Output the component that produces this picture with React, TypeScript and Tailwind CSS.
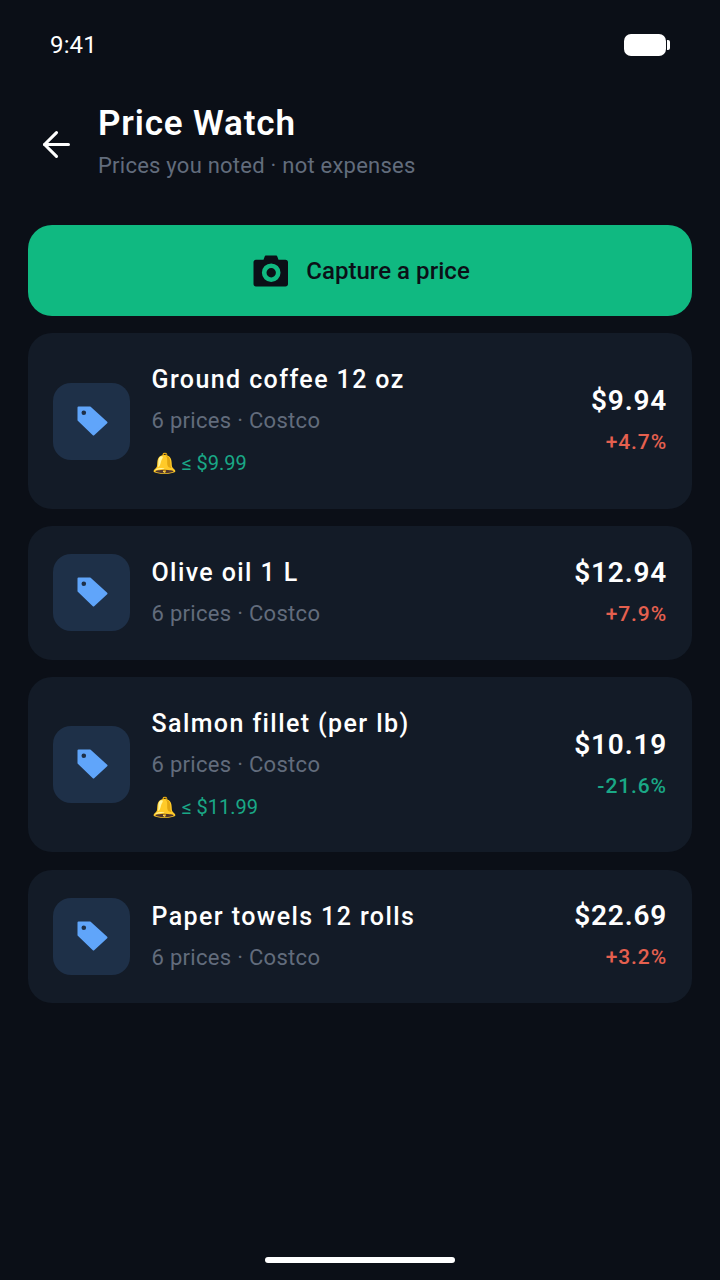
import { ArrowLeft } from "lucide-react";

interface Item {
  name: string;
  price: string;
  change: string;
  up: boolean;
  alert?: string;
}

const items: Item[] = [
  { name: "Ground coffee 12 oz", price: "$9.94", change: "+4.7%", up: true, alert: "≤ $9.99" },
  { name: "Olive oil 1 L", price: "$12.94", change: "+7.9%", up: true },
  { name: "Salmon fillet (per lb)", price: "$10.19", change: "-21.6%", up: false, alert: "≤ $11.99" },
  { name: "Paper towels 12 rolls", price: "$22.69", change: "+3.2%", up: true },
];

function TagIcon() {
  return (
    <svg width="33" height="33" viewBox="0 0 33 33" className="ml-[1.5px]">
      <path
        d="M2.5 2.5H14L30.5 17.5L17.5 29.5L2.5 15ZM7.8 4.5a3.3 3.3 0 1 0 0 6.6a3.3 3.3 0 1 0 0-6.6Z"
        fill="#60a5fa"
        stroke="#60a5fa"
        strokeWidth="2"
        strokeLinejoin="round"
        fillRule="evenodd"
      />
    </svg>
  );
}

function CameraIcon() {
  return (
    <svg width="36" height="32" viewBox="0 0 36 32" fill="#0b0f17">
      <path
        d="M10.5 4.7 11.6 1.8C11.8 1.1 12.4.6 13.2.6H22.8C23.6.6 24.2 1.1 24.4 1.8L25.5 4.7H32.5C34 4.7 35 5.7 35 7.2V29C35 30.5 34 31.5 32.5 31.5H3C1.5 31.5.5 30.5.5 29V7.2C.5 5.7 1.5 4.7 3 4.7ZM18.2 8.4a9.3 9.3 0 1 0 0 18.6a9.3 9.3 0 1 0 0-18.6ZM18.2 13a4.7 4.7 0 1 1 0 9.4a4.7 4.7 0 1 1 0-9.4Z"
        fillRule="evenodd"
      />
    </svg>
  );
}

function PriceCard({ item }: { item: Item }) {
  return (
    <div className="flex items-center rounded-[24px] bg-[#131b27] px-[25px]">
      <div className="flex h-[77px] w-[77px] shrink-0 items-center justify-center rounded-[18px] bg-[#1e3048]">
        <TagIcon />
      </div>
      <div className="ml-[21.5px] flex min-w-0 flex-1 flex-col gap-[12px] pt-[31px] pb-[30.5px]">
        <div className="mt-[1px] -mb-[1px] text-[25px] leading-[30px] font-medium tracking-[1.4px] text-white">{item.name}</div>
        <div className="text-[22px] leading-[30px] tracking-[0.3px] text-[#626c7c]">6 prices · Costco</div>
        {item.alert && (
          <div className="text-[20px] leading-[30px] text-[#1aa886]">🔔 {item.alert}</div>
        )}
      </div>
      <div className="flex flex-col items-end gap-[12px]">
        <div className="mt-[1px] -mb-[1px] text-[28px] leading-[30px] font-semibold tracking-[0.8px] text-white">{item.price}</div>
        <div className={`text-[21px] leading-[30px] font-medium tracking-[0.9px] ${item.up ? "text-[#e5604f]" : "text-[#1aa886]"}`}>
          {item.change}
        </div>
      </div>
    </div>
  );
}

export default function App() {
  return (
    <div className="flex h-[1280px] w-[720px] flex-col overflow-hidden bg-[#0b0f17] font-['Roboto',sans-serif]">
      <div className="flex h-[90px] shrink-0 items-center justify-between px-[50px]">
        <span className="text-[24px] tracking-[0.15px] text-white">9:41</span>
        <div className="flex items-center">
          <div className="h-[22px] w-[42px] rounded-[7px] bg-white" />
          <div className="ml-[1px] h-[10px] w-[3px] rounded-r-[2px] bg-white" />
        </div>
      </div>

      <div className="flex items-center pt-[12px] pl-[36px]">
        <div className="mt-[6px]">
          <ArrowLeft size={41} strokeWidth={1.8} color="#ffffff" />
        </div>
        <div className="ml-[21px] flex flex-col">
          <h1 className="text-[35px] leading-[44px] font-semibold tracking-[0.85px] text-white">Price Watch</h1>
          <p className="mt-[6px] text-[22px] leading-[28px] tracking-[0.24px] text-[#626c7c]">Prices you noted · not expenses</p>
        </div>
      </div>

      <div className="mt-[45px] flex flex-col gap-[17.25px] px-[28px]">
        <button className="flex h-[91px] items-center justify-center gap-[17.5px] rounded-[24px] bg-[#10b981] pl-[2.5px] text-[24px] font-medium tracking-[0.05px] text-[#0b0f17]">
          <CameraIcon />
          Capture a price
        </button>
        {items.map((item) => (
          <PriceCard key={item.name} item={item} />
        ))}
      </div>

      <div className="mt-auto mb-[17px] h-[6px] w-[190px] self-center rounded-full bg-white" />
    </div>
  );
}
